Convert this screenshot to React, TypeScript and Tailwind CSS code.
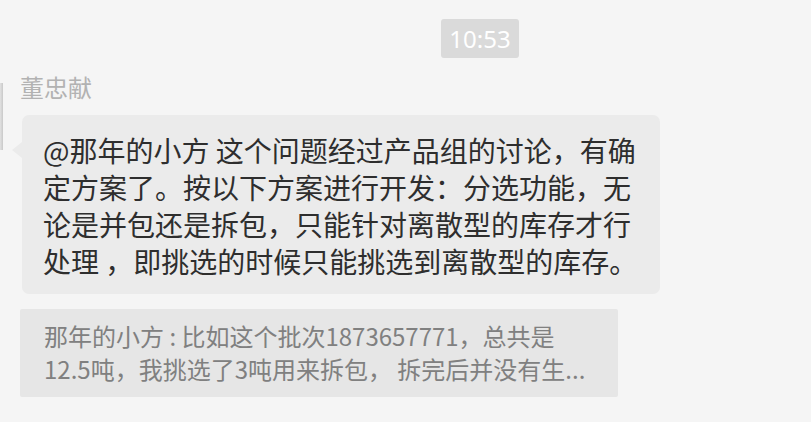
const cjk = '"Noto Sans CJK SC", "Noto Sans", sans-serif';

const lines = [
  "@那年的小方 这个问题经过产品组的讨论，有确",
  "定方案了。按以下方案进行开发：分选功能，无",
  "论是并包还是拆包，只能针对离散型的库存才行",
  "处理 ，即挑选的时候只能挑选到离散型的库存。",
];

const quoteLines = [
  "那年的小方 : 比如这个批次1873657771，总共是",
  "12.5吨，我挑选了3吨用来拆包， 拆完后并没有生...",
];

export default function App() {
  return (
    <div
      className="w-[811px] h-[422px] overflow-hidden bg-[#f5f5f5] pt-[19px]"
      style={{ fontFamily: cjk }}
    >
      {/* time stamp */}
      <div className="ml-[441px] flex h-[39px] w-[78px] items-center justify-center rounded-[3px] bg-[#dadada] text-[24px] leading-none text-white font-['Noto_Sans',sans-serif]">
        10:53
      </div>

      {/* message */}
      <div className="mt-[14px] flex">
        <div className="mt-[11px] h-[67px] w-[3px] bg-gradient-to-r from-[#e2e2e2] to-[#c9c9c9]" />
        <div className="ml-[17px] flex flex-col">
          <div className="text-[24px] leading-[30px] text-[#b2b2b2]">董忠献</div>

          <div className="relative ml-[2px] mt-[13px] w-[638px] rounded-[7px] bg-[#ebebeb] pl-[21px] pt-[17px] pb-[14px]">
            <span className="absolute left-[-10px] top-[27px] h-0 w-0 border-y-[8px] border-r-[10px] border-y-transparent border-r-[#ebebeb]" />
            {lines.map((l) => (
              <div
                key={l}
                className="whitespace-pre text-[28px] leading-[37px] text-[#2e2e2e]"
              >
                {l}
              </div>
            ))}
          </div>

          <div className="mt-[15px] w-[598px] rounded-[2px] bg-[#e6e6e6] pl-[24px] pt-[10px] pb-[12px]">
            {quoteLines.map((l) => (
              <div
                key={l}
                className="whitespace-pre text-[24px] leading-[33px] text-[#808080]"
              >
                {l}
              </div>
            ))}
          </div>
        </div>
      </div>
    </div>
  );
}
